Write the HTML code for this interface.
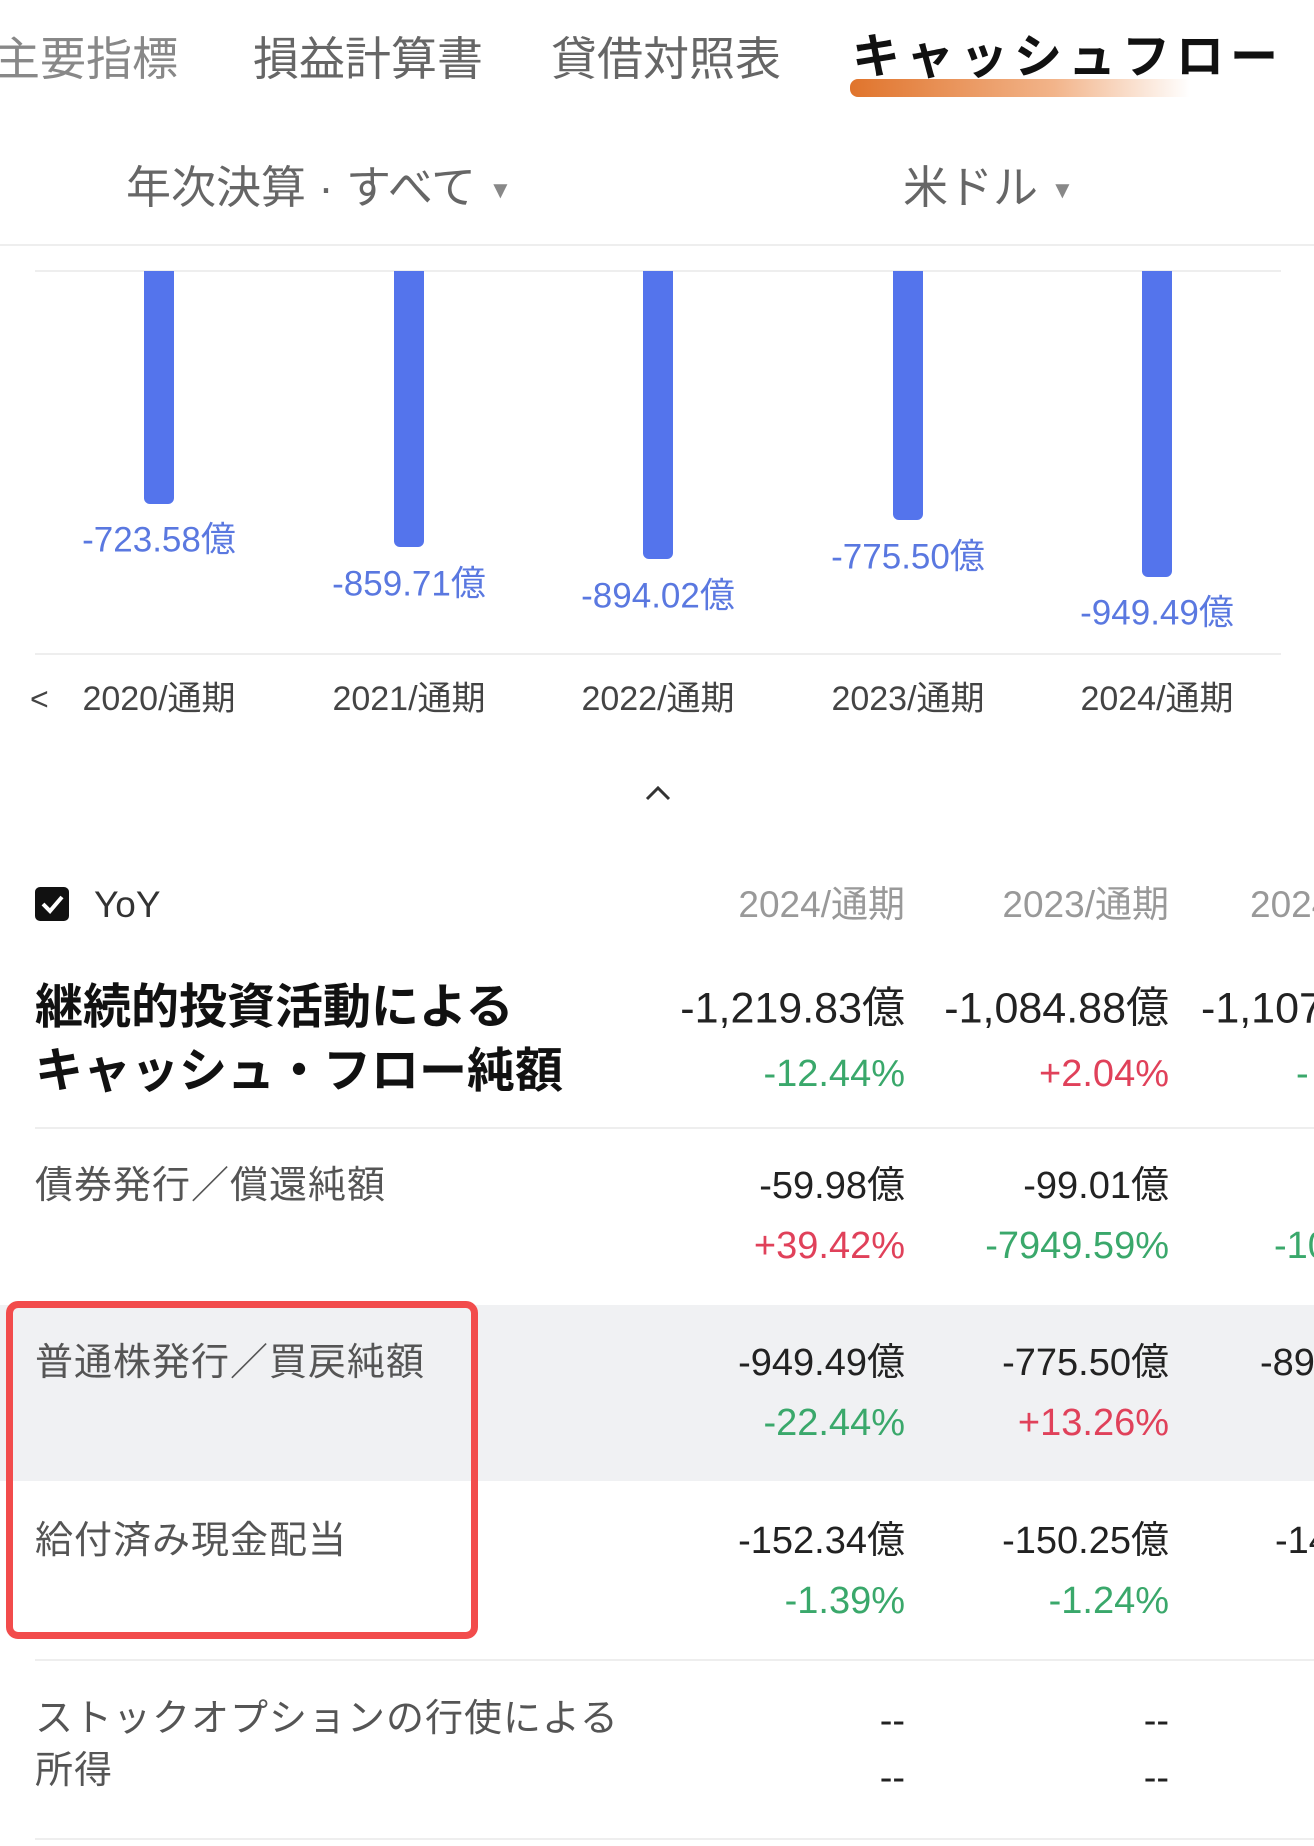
<!DOCTYPE html>
<html><head><meta charset="utf-8"><style>
body{margin:0;width:1314px;height:1846px;overflow:hidden;background:#fff;font-family:"Liberation Sans","Noto Sans CJK JP",sans-serif;position:relative}
.a{position:absolute;white-space:nowrap;line-height:1}
.r{text-align:right}
.tab{font-size:46px;color:#666;top:36px}
.bar{position:absolute;width:30px;background:#5474ec;border-radius:0 0 6px 6px;top:271px}
.lbl{font-size:35px;color:#5a78e0;transform:translate(-50%,-50%)}
.xl{font-size:34px;color:#444;top:682px;transform:translateX(-50%)}
.line{position:absolute;height:2px;background:#eeeeee}
.v{font-size:38px;color:#222;transform:translateY(-50%)}
.p{font-size:38px;transform:translateY(-50%)}
.g{color:#3aa86b}.rd{color:#e0415a}
.lb{font-size:38px;color:#555;transform:translateY(-50%);letter-spacing:1px}
</style></head><body>
<div class="a tab" style="left:-6px;color:#888">主要指標</div>
<div class="a tab" style="left:253px">損益計算書</div>
<div class="a tab" style="left:551px">貸借対照表</div>
<div style="position:absolute;left:850px;top:79px;width:340px;height:18px;border-radius:8px 0 0 8px;background:linear-gradient(90deg,#e0742c,#f2b48a 60%,rgba(255,255,255,0))"></div>
<div class="a tab" style="left:852px;color:#111;font-weight:bold;font-size:48px;top:34px;letter-spacing:6px">キャッシュフロー</div>
<div class="a" style="left:126px;top:165px;font-size:45px;color:#666">年次決算 · すべて <span style="font-size:24px;color:#888;vertical-align:middle">▼</span></div>
<div class="a" style="left:903px;top:165px;font-size:45px;color:#666">米ドル <span style="font-size:24px;color:#888;vertical-align:middle">▼</span></div>
<div class="line" style="left:0;width:1314px;top:244px"></div>
<div class="line" style="left:35px;width:1246px;top:270px"></div>
<div class="bar" style="left:144px;height:233px"></div>
<div class="bar" style="left:394px;height:276px"></div>
<div class="bar" style="left:643px;height:288px"></div>
<div class="bar" style="left:893px;height:249px"></div>
<div class="bar" style="left:1142px;height:306px"></div>
<div class="a lbl" style="left:159px;top:540px">-723.58億</div>
<div class="a lbl" style="left:409px;top:584px">-859.71億</div>
<div class="a lbl" style="left:658px;top:596px">-894.02億</div>
<div class="a lbl" style="left:908px;top:557px">-775.50億</div>
<div class="a lbl" style="left:1157px;top:613px">-949.49億</div>
<div class="line" style="left:35px;width:1246px;top:653px"></div>
<div class="a" style="left:30px;top:683px;font-size:32px;color:#444">&lt;</div>
<div class="a xl" style="left:159px">2020/通期</div>
<div class="a xl" style="left:409px">2021/通期</div>
<div class="a xl" style="left:658px">2022/通期</div>
<div class="a xl" style="left:908px">2023/通期</div>
<div class="a xl" style="left:1157px">2024/通期</div>
<svg style="position:absolute;left:645px;top:785px" width="26" height="16"><path d="M2 14 L13 3 L24 14" stroke="#333" stroke-width="3" fill="none"/></svg>
<div style="position:absolute;left:35px;top:887px;width:34px;height:34px;background:#111;border-radius:5px"><svg width="34" height="34"><path d="M8 17 L15 24 L27 10" stroke="#fff" stroke-width="4" fill="none"/></svg></div>
<div class="a" style="left:94px;top:886px;font-size:37px;color:#333">YoY</div>
<div class="a r" style="right:409px;top:886px;font-size:37px;color:#999">2024/通期</div>
<div class="a r" style="right:145px;top:886px;font-size:37px;color:#999">2023/通期</div>
<div class="a" style="left:1250px;top:886px;font-size:37px;color:#999">2024</div>
<div class="a" style="left:35px;top:984px;font-size:48px;font-weight:bold;color:#111">継続的投資活動による</div>
<div class="a" style="left:35px;top:1048px;font-size:48px;font-weight:bold;color:#111">キャッシュ・フロー純額</div>
<div class="a v r" style="right:409px;top:1009px;font-size:43px">-1,219.83億</div>
<div class="a v r" style="right:145px;top:1009px;font-size:43px">-1,084.88億</div>
<div class="a v" style="left:1201px;top:1009px;font-size:43px">-1,107.0</div>
<div class="a p r g" style="right:409px;top:1074px">-12.44%</div>
<div class="a p r rd" style="right:145px;top:1074px">+2.04%</div>
<div class="a p g" style="left:1296px;top:1074px">-</div>
<div class="line" style="left:35px;width:1279px;top:1127px"></div>
<div class="a lb" style="left:35px;top:1186px">債券発行／償還純額</div>
<div class="a v r" style="right:409px;top:1186px">-59.98億</div>
<div class="a v r" style="right:145px;top:1186px">-99.01億</div>
<div class="a p r rd" style="right:409px;top:1246px">+39.42%</div>
<div class="a p r g" style="right:145px;top:1246px">-7949.59%</div>
<div class="a p g" style="left:1274px;top:1246px">-10</div>
<div style="position:absolute;left:0;top:1305px;width:1314px;height:176px;background:#f0f1f3"></div>
<div class="a lb" style="left:35px;top:1363px">普通株発行／買戻純額</div>
<div class="a v r" style="right:409px;top:1363px">-949.49億</div>
<div class="a v r" style="right:145px;top:1363px">-775.50億</div>
<div class="a v" style="left:1260px;top:1363px">-89</div>
<div class="a p r g" style="right:409px;top:1423px">-22.44%</div>
<div class="a p r rd" style="right:145px;top:1423px">+13.26%</div>
<div class="a lb" style="left:35px;top:1541px">給付済み現金配当</div>
<div class="a v r" style="right:409px;top:1541px">-152.34億</div>
<div class="a v r" style="right:145px;top:1541px">-150.25億</div>
<div class="a v" style="left:1275px;top:1541px">-14</div>
<div class="a p r g" style="right:409px;top:1601px">-1.39%</div>
<div class="a p r g" style="right:145px;top:1601px">-1.24%</div>
<div style="position:absolute;left:6px;top:1301px;width:458px;height:324px;border:7px solid #f24c4c;border-radius:12px"></div>
<div class="line" style="left:35px;width:1279px;top:1659px"></div>
<div class="a lb" style="left:35px;top:1719px">ストックオプションの行使による</div>
<div class="a lb" style="left:35px;top:1771px">所得</div>
<div class="a v r" style="right:409px;top:1721px">--</div>
<div class="a v r" style="right:145px;top:1721px">--</div>
<div class="a v r" style="right:409px;top:1778px">--</div>
<div class="a v r" style="right:145px;top:1778px">--</div>
<div class="line" style="left:35px;width:1279px;top:1838px"></div>
</body></html>
